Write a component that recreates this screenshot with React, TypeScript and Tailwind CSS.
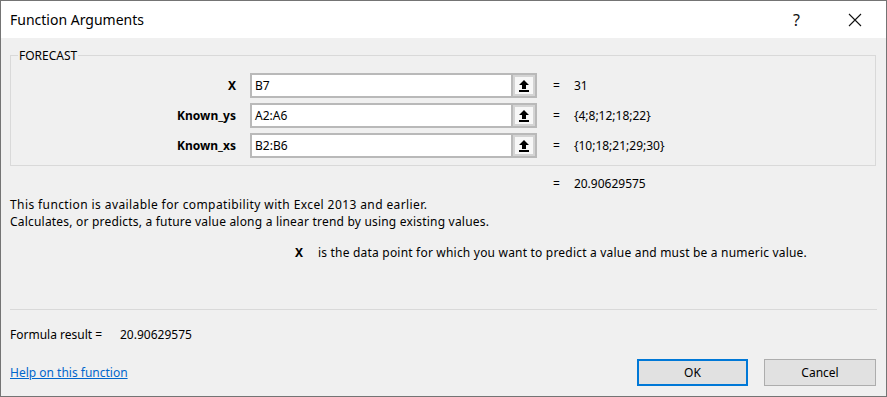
import React from "react";

const font = { fontFamily: '"Noto Sans", "Open Sans", sans-serif' };

function UpIcon() {
  return (
    <svg width="12" height="14" viewBox="0 0 12 14">
      <polygon points="6,1 11,6 8,6 8,10 4,10 4,6 1,6" fill="#000" />
      <rect x="1" y="11" width="10" height="2" fill="#000" />
    </svg>
  );
}

function Row({ label, value, result }: { label: string; value: string; result: string }) {
  return (
    <div className="flex items-center h-[25px]">
      <div className="w-[226px] text-right font-bold text-[12px] text-black pr-[1px]">{label}</div>
      <div className="ml-[13px] flex h-[25px] w-[287px] border-2 border-[#b9b9b9] bg-white">
        <div className="flex-1 flex items-center pl-[3px] text-[12px] text-black">{value}</div>
        <div className="w-[24px] border-l-2 border-[#b9b9b9] bg-[#d4d4d4] p-[2px]">
          <div className="w-full h-full bg-[#f7f7f7] flex items-center justify-center">
            <UpIcon />
          </div>
        </div>
      </div>
      <div className="ml-[16px] text-[12px] text-black">=</div>
      <div className="ml-[14px] text-[12px] text-black">{result}</div>
    </div>
  );
}

export default function App() {
  return (
    <div className="w-[887px] h-[397px] border border-[#747474] bg-[#f0f0f0] flex flex-col text-black" style={font}>
      <div className="h-[37px] bg-white flex items-center shrink-0">
        <div className="ml-[9px] text-[14px] leading-none text-black">Function Arguments</div>
        <div className="ml-auto text-[16px] leading-none mr-[48px] text-[#111]">?</div>
        <svg width="14" height="14" viewBox="0 0 14 14" className="mr-[24px]">
          <path d="M1 1 L13 13 M13 1 L1 13" stroke="#111" strokeWidth="1.1" />
        </svg>
      </div>
      <div className="relative mx-[9px] mt-[17px] border border-[#d9d9d9] pt-[17px] pb-[5px] w-[866px] h-[111px]">
        <div className="absolute -top-[9px] left-[7px] px-[1px] bg-[#f0f0f0] text-[12px] leading-[17px] text-black">FORECAST</div>
        <div className="flex flex-col gap-[5px]">
          <Row label="X" value="B7" result="31" />
          <Row label="Known_ys" value="A2:A6" result="{4;8;12;18;22}" />
          <Row label="Known_xs" value="B2:B6" result="{10;18;21;29;30}" />
        </div>
      </div>
      <div className="flex h-[17px] mt-[9px] text-[12px] items-center">
        <div className="ml-[552px]">=</div>
        <div className="ml-[14px]">20.90629575</div>
      </div>
      <div className="ml-[9px] mt-[4px] text-[12px] leading-[17px]">
        <div className="tracking-[0.4px]">This function is available for compatibility with Excel 2013 and earlier.</div>
        <div className="tracking-[0.2px]">Calculates, or predicts, a future value along a linear trend by using existing values.</div>
      </div>
      <div className="flex mt-[14px] text-[12px] leading-[17px] items-center">
        <div className="ml-[294px] font-bold w-[23px]">X</div>
        <div className="tracking-[0.2px]">is the data point for which you want to predict a value and must be a numeric value.</div>
      </div>
      <div className="mx-[9px] mt-[48px] h-px bg-[#d9d9d9]" />
      <div className="flex ml-[9px] mt-[16px] text-[12px] leading-[17px]">
        <div className="w-[110px]">Formula result =</div>
        <div>20.90629575</div>
      </div>
      <div className="flex items-start mt-[16px] ml-[9px]">
        <a className="text-[12px] leading-[17px] text-[#0066cc] underline mt-[5px]" href="#">Help on this function</a>
        <button className="ml-auto w-[111px] h-[27px] border-2 border-[#0078d7] bg-[#e1e1e1] text-[12px] text-black">OK</button>
        <button className="ml-[16px] mr-[10px] w-[112px] h-[27px] border border-[#adadad] bg-[#e1e1e1] text-[12px] text-black">Cancel</button>
      </div>
    </div>
  );
}
